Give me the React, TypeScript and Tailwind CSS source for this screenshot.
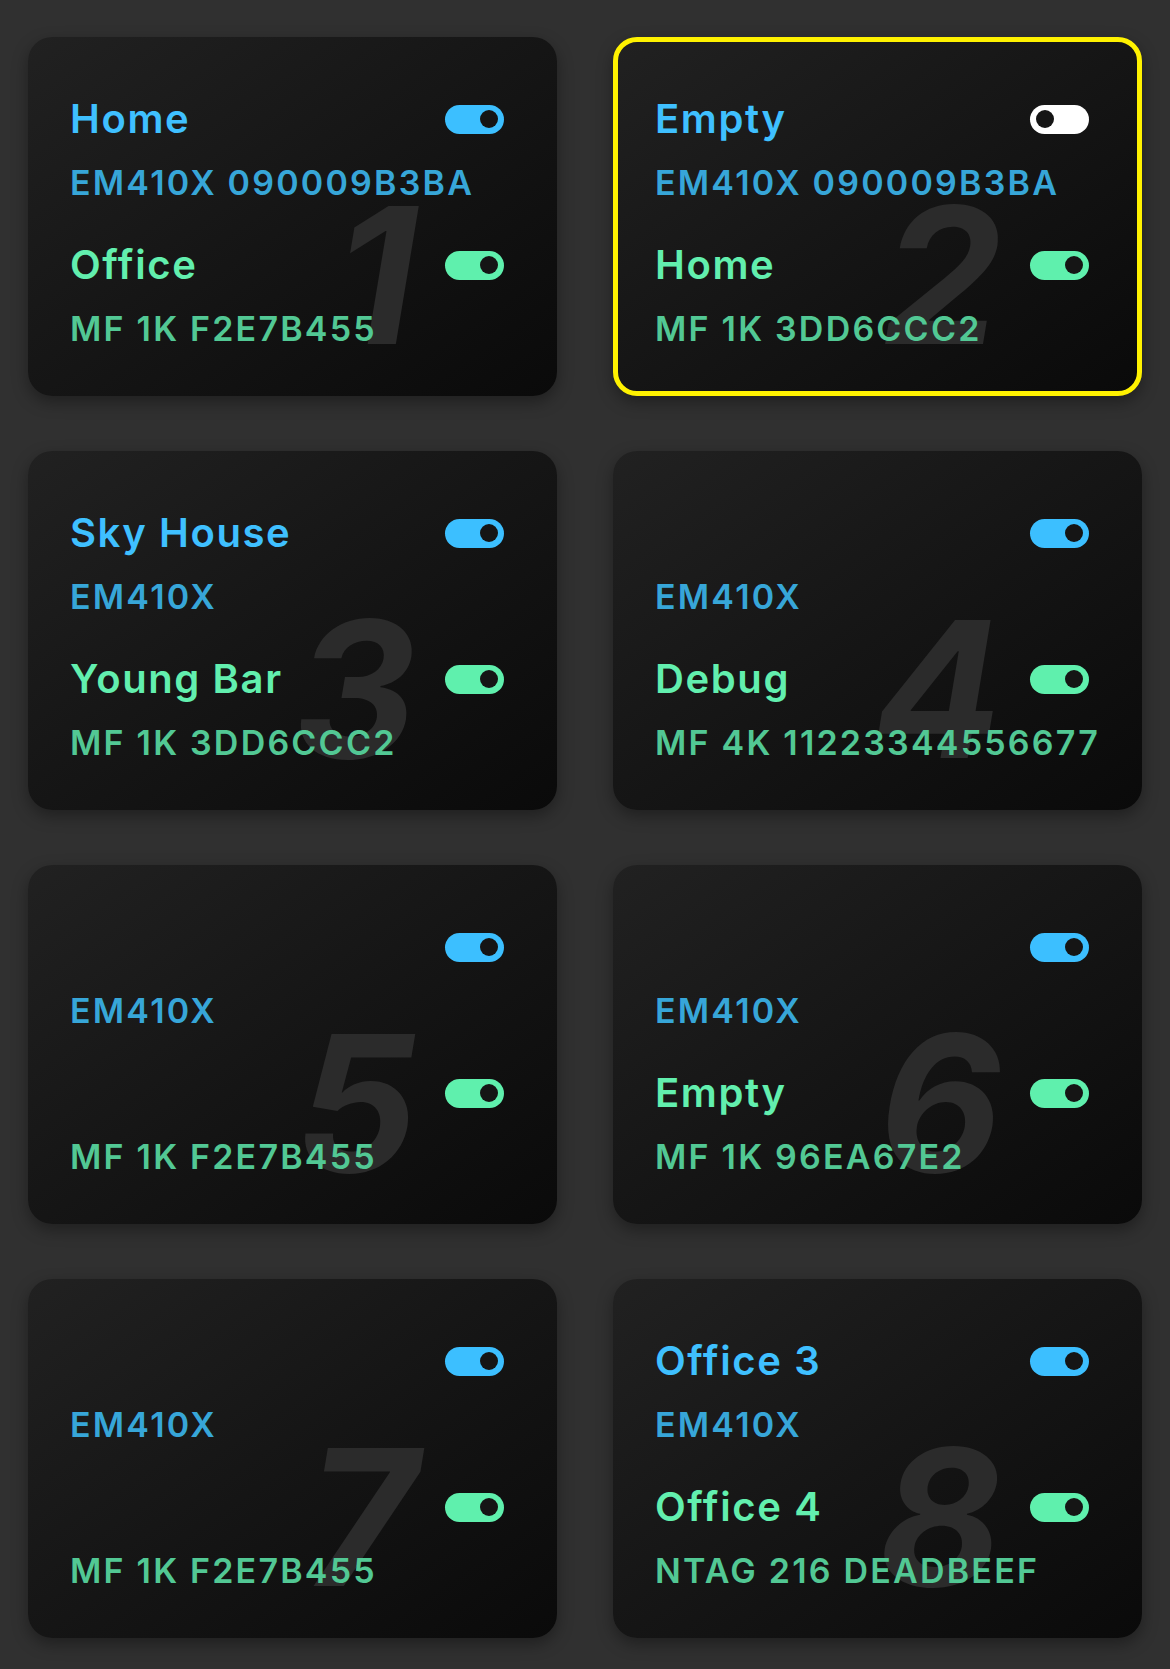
import React from "react";

type Slot = {
  id: number;
  hfName: string;
  hfOn: boolean;
  lfName: string;
  lfTag: string;
  hfTag: string;
  lfOn: boolean;
};

// top row is the LF (blue) tag, bottom row is the HF (green) tag
const slots: Slot[] = [
  { id: 1, lfName: "Home", lfTag: "EM410X 090009B3BA", hfName: "Office", hfTag: "MF 1K F2E7B455", lfOn: true, hfOn: true },
  { id: 2, lfName: "Empty", lfTag: "EM410X 090009B3BA", hfName: "Home", hfTag: "MF 1K 3DD6CCC2", lfOn: false, hfOn: true },
  { id: 3, lfName: "Sky House", lfTag: "EM410X", hfName: "Young Bar", hfTag: "MF 1K 3DD6CCC2", lfOn: true, hfOn: true },
  { id: 4, lfName: "", lfTag: "EM410X", hfName: "Debug", hfTag: "MF 4K 11223344556677", lfOn: true, hfOn: true },
  { id: 5, lfName: "", lfTag: "EM410X", hfName: "", hfTag: "MF 1K F2E7B455", lfOn: true, hfOn: true },
  { id: 6, lfName: "", lfTag: "EM410X", hfName: "Empty", hfTag: "MF 1K 96EA67E2", lfOn: true, hfOn: true },
  { id: 7, lfName: "", lfTag: "EM410X", hfName: "", hfTag: "MF 1K F2E7B455", lfOn: true, hfOn: true },
  { id: 8, lfName: "Office 3", lfTag: "EM410X", hfName: "Office 4", hfTag: "NTAG 216 DEADBEEF", lfOn: true, hfOn: true },
];

const Toggle = ({ on, green }: { on: boolean; green?: boolean }) => (
  <div
    className={`flex h-[29px] w-[59px] shrink-0 items-center rounded-full px-[6px] ${
      on ? (green ? "justify-end bg-[#5ff0ad]" : "justify-end bg-[#3cbfff]") : "justify-start bg-white"
    }`}
  >
    <div className="h-[18px] w-[18px] rounded-full bg-[#151515]" />
  </div>
);

const TagRow = ({
  name,
  tag,
  on,
  green,
}: {
  name: string;
  tag: string;
  on: boolean;
  green?: boolean;
}) => (
  <div>
    <div className="flex items-center justify-between">
      <span
        className={`h-[48px] text-[40px] leading-[48px] font-semibold tracking-[0.04em] ${
          green ? "text-[#62efae]" : "text-[#3fc0ff]"
        }`}
      >
        {name}
      </span>
      <Toggle on={on} green={green} />
    </div>
    <div
      className={`mt-[20px] whitespace-nowrap text-[34px] leading-[40px] font-semibold tracking-[0.065em] ${
        green ? "text-[#52c894]" : "text-[#37a6d8]"
      }`}
    >
      {tag}
    </div>
  </div>
);

const SlotCard = ({ slot, selected }: { slot: Slot; selected: boolean }) => (
  <div
    className={`relative h-[359px] rounded-[24px] bg-gradient-to-br from-[#212121] to-[#0a0a0a] shadow-[0_6px_16px_rgba(0,0,0,0.35)] ${
      selected
        ? "border-[5px] border-[#fff200] pt-[53px] pl-[37px] pr-[48px]"
        : "pt-[58px] pl-[42px] pr-[53px]"
    }`}
  >
    <span
      className={`pointer-events-none absolute text-[190px] leading-none font-bold italic text-[#2b2b2b] ${
        selected ? "top-[138px] right-[135px]" : "top-[143px] right-[140px]"
      }`}
    >
      {slot.id}
    </span>
    <div className="relative flex flex-col gap-[38px]">
      <TagRow name={slot.lfName} tag={slot.lfTag} on={slot.lfOn} />
      <TagRow name={slot.hfName} tag={slot.hfTag} on={slot.hfOn} green />
    </div>
  </div>
);

export default function App() {
  return (
    <div
      className="min-h-screen bg-[#303030] px-[28px] pt-[37px] pb-[30px]"
      style={{ fontFamily: "Inter, 'Noto Sans', sans-serif" }}
    >
      <div className="grid grid-cols-2 gap-x-[56px] gap-y-[55px]">
        {slots.map((s) => (
          <SlotCard key={s.id} slot={s} selected={s.id === 2} />
        ))}
      </div>
    </div>
  );
}
